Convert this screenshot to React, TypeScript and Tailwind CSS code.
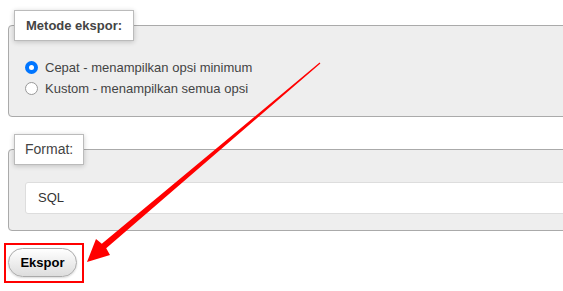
import React from 'react';

const font = { fontFamily: '"Liberation Sans", Arial, sans-serif' };

const Arrow: React.FC = () => (
  <svg
    className="pointer-events-none absolute left-0 top-0"
    width={563}
    height={291}
    viewBox="0 0 563 291"
  >
    <polygon
      fill="#ff0000"
      points="319.6,62.6 101.8,243.8 96,239 87,262 110,255 106.2,248.2 320.4,63.4"
    />
  </svg>
);

const Radio: React.FC<{ checked?: boolean }> = ({ checked }) =>
  checked ? (
    <span className="flex h-[13px] w-[13px] items-center justify-center rounded-full bg-[#0075ff]">
      <span className="h-[5px] w-[5px] rounded-full bg-white" />
    </span>
  ) : (
    <span className="h-[13px] w-[13px] rounded-full border border-[#999] bg-white" />
  );

const App: React.FC = () => {
  return (
    <div
      className="relative h-[291px] w-[563px] overflow-hidden bg-white pl-[8px] pt-[10px] text-[#444]"
      style={font}
    >
      <fieldset className="w-[620px] rounded-[4px] border border-[#aaa] bg-[#eee] pb-[17px] pl-[5px] pt-[16px]">
        <legend className="border border-[#bbb] bg-white px-[11px] py-[7px] text-[13px] font-bold leading-[15px] text-[#444] shadow-[0_1px_5px_rgba(0,0,0,0.2)]">
          Metode ekspor:
        </legend>
        <div className="ml-[11px] flex flex-col text-[13px]">
          <label className="flex h-[21px] items-center">
            <Radio checked />
            <span className="ml-[7px]">Cepat - menampilkan opsi minimum</span>
          </label>
          <label className="flex h-[21px] items-center">
            <Radio />
            <span className="ml-[7px]">Kustom - menampilkan semua opsi</span>
          </label>
        </div>
      </fieldset>

      <fieldset className="mt-[17px] w-[620px] rounded-[4px] border border-[#aaa] bg-[#eee] pb-[16px] pl-[5px] pt-[17px]">
        <legend className="border border-[#bbb] bg-white px-[10px] py-[6px] text-[14px] leading-[17px] text-[#444] shadow-[0_1px_5px_rgba(0,0,0,0.2)]">
          Format:
        </legend>
        <div className="ml-[11px] flex h-[32px] items-center rounded-[3px] border border-[#ddd] bg-white pl-[12px] text-[13px] text-[#333]">
          SQL
        </div>
      </fieldset>

      <div className="-ml-[4px] mt-[12px] inline-flex border-2 border-[#ff0000] pb-[4px] pl-[2px] pr-[5px] pt-[3px]">
        <button
          type="button"
          className="flex h-[29px] w-[69px] items-center justify-center rounded-full border border-[#aaa] bg-gradient-to-b from-white to-[#ddd] text-[13px] font-bold text-black shadow-[0_1px_2px_rgba(0,0,0,0.15)]"
        >
          Ekspor
        </button>
      </div>

      <Arrow />
    </div>
  );
};

export default App;
